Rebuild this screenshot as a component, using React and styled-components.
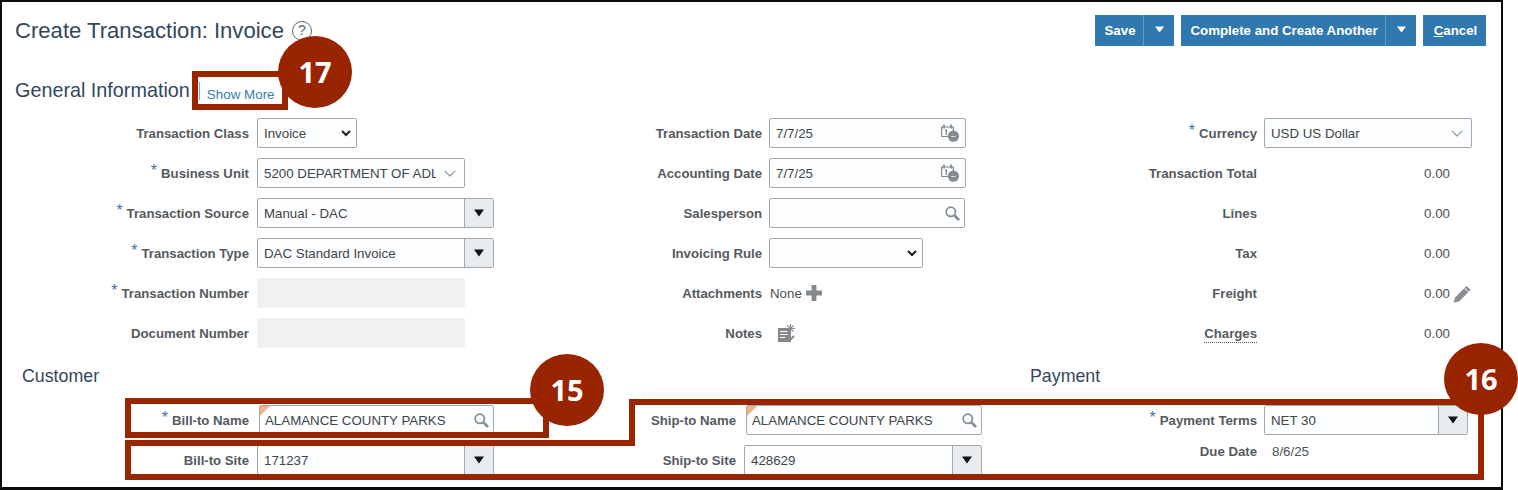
import React from "react";
import styled, { createGlobalStyle } from "styled-components";

const Global = createGlobalStyle`
  html, body { margin: 0; padding: 0; background: #fff; overflow: hidden; }
  body { font-family: "Liberation Sans", Arial, sans-serif; }
`;
const Page = styled.div`position: relative; width: 1518px; height: 490px; overflow: hidden; background: #fff;`;
const Frame = styled.main`
  box-sizing: border-box; width: 1503px; height: 490px;
  border: solid #0c0c0c; border-width: 2px 2px 3px 2px; background: #fff;
`;
const Header = styled.header`display: flex; justify-content: space-between; align-items: center; padding: 13px 15px 0 13px; height: 31px;`;
const TitleWrap = styled.div`display: flex; align-items: center; gap: 8px;`;
const Title = styled.h1`margin: 0; font-size: 22.1px; font-weight: 400; color: #33475b; line-height: 31px; white-space: nowrap;`;
const Help = styled.span`
  box-sizing: border-box; width: 20px; height: 20px; border-radius: 50%; border: 1.5px solid #5c6670; color: #5c6670;
  font-size: 14px; line-height: 17px; text-align: center;
`;
const Actions = styled.div`display: flex; gap: 7px;`;
const ActionGroup = styled.div`display: flex; height: 31px; background: #2f79ae; color: #fff;`;
const ActionLabel = styled.button`
  border: 0; background: transparent; color: #fff; font: bold 13.3px "Liberation Sans", sans-serif;
  width: ${p => p.$w}px; padding: 0 0 0 2px; text-align: center;
`;
const ActionCaret = styled.span`
  width: 31px; display: flex; align-items: center; justify-content: center; border-left: 1px solid #5f9ac4; padding-bottom: 3px; box-sizing: border-box;
`;
const SectionBar = styled.div`display: flex; align-items: center; height: 34px; padding: 27px 0 6px 13px;`;
const SectionTitle = styled.h2`margin: 0; font-size: 19.8px; font-weight: 400; color: #33475b; line-height: 34px; white-space: nowrap;`;
const Divider = styled.span`width: 1px; height: 18px; background: #9aa2a8; margin: 2px 7px 0 9px;`;
const ShowMore = styled.a`font-size: 13.4px; color: #3a7cad; margin-top: 8px; white-space: nowrap;`;
const Columns = styled.div`display: grid; grid-template-columns: 500px 500px 1fr;`;
const Column = styled.div`display: flex; flex-direction: column;`;
const Row = styled.div`
  display: grid; grid-template-columns: ${p => p.$label}px auto; column-gap: ${p => p.$gap ?? 7}px;
  height: ${p => p.$h ?? 40}px; align-items: center; justify-content: start;
`;
const Label = styled.div`
  text-align: right; font-size: 13.2px; font-weight: 700; color: #555a60; white-space: nowrap;
`;
const Req = styled.span`color: #3f74ab; font-size: 16px; font-weight: 400; margin-right: 4px; vertical-align: 2px; line-height: 0;`;
const Charges = styled.span`border-bottom: 1px dotted #555a60; padding-bottom: 1px;`;
const Field = styled.div`
  position: relative; box-sizing: border-box; width: ${p => p.$w}px; height: 30px; margin-left: ${p => p.$inset ?? 0}px;
  display: flex; align-items: center; justify-content: space-between;
  border: 1.5px solid #a2a9ae; border-radius: 2px; background: ${p => p.$off ? "#f0f1f2" : "#fbfdfe"};
  ${p => p.$off ? "border-color: #f0f1f2;" : ""}
  font-size: 13.3px; color: #3f4448; padding-left: ${p => p.$inset ? 5 : 6}px; white-space: nowrap; overflow: hidden;
`;
const FieldText = styled.span`overflow: hidden; flex: 1; min-width: 0;`;
const IconSlot = styled.span`display: flex; align-items: center; justify-content: center; flex: none; width: ${p => p.$w}px;`;
const DropBtn = styled.span`
  flex: none; align-self: stretch; width: 29px; display: flex; align-items: center; justify-content: center;
  background: #e9ecef; border-left: 1.5px solid #a2a9ae; box-sizing: border-box;
`;
const Corner = styled.span`
  position: absolute; left: 0; top: 0; width: 0; height: 0; border-style: solid; border-width: 10px 10px 0 0;
  border-color: #f4b183 transparent transparent transparent;
`;
const Value = styled.div`font-size: 13.3px; color: #4a4f54; white-space: nowrap; display: flex; align-items: center; gap: ${p => p.$gap ?? 4}px; padding-left: ${p => p.$pad ?? 0}px;`;
const Amount = styled.div`
  width: 186px; display: flex; justify-content: flex-end; align-items: center; position: relative; font-size: 13.3px; color: #4a4f54;
`;
const PencilSlot = styled.span`position: absolute; left: 189px; top: -1px;`;
const Subheads = styled.div`display: grid; grid-template-columns: 1008px 1fr; height: 47px; align-items: center; padding-left: 20px;`;
const Subhead = styled.h3`margin: 0; font-size: 17.8px; font-weight: 400; color: #33475b;`;
const Overlay = styled.svg`position: absolute; inset: 0; pointer-events: none;`;
const Badge = styled.div`
  position: absolute; left: ${p => p.$x - 37}px; top: ${p => p.$y - 36}px; width: 74px; height: 72px; border-radius: 50%;
  background: #992500; color: #fff; font: 700 29px/72px "Open Sans", sans-serif; text-align: center;
`;

const Caret = ({ c = "#111", w = 10, h = 8 }) => (
  <svg width={w} height={h} viewBox="0 0 12 9" preserveAspectRatio="none"><path d="M0 .5h12L6 8.500z" fill={c} /></svg>
);
const Chevron = ({ bold }) => bold ? (
  <svg width="10" height="7" viewBox="0 0 10 7"><path d="M1 1l4 4 4-4" fill="none" stroke="#222" strokeWidth="2.1" /></svg>
) : (
  <svg width="12" height="7" viewBox="0 0 12 7"><path d="M.8.8 6 6 11.200.8" fill="none" stroke="#8e9499" strokeWidth="1.1" /></svg>
);
const SearchIcon = () => (
  <svg width="15" height="15" viewBox="0 0 15 15"><circle cx="5.800" cy="5.800" r="4.600" fill="none" stroke="#858b90" strokeWidth="1.700" /><path d="M9.200 9.200 14 14" stroke="#858b90" strokeWidth="2.600" /></svg>
);
const CalendarIcon = () => (
  <svg width="18" height="18" viewBox="0 0 18 18">
    <path d="M.7 3h11.600v9.500H.7z" fill="#fff" stroke="#7d8388" strokeWidth="1.200" />
    <path d="M3 .5v4M10 .5v4" stroke="#7d8388" strokeWidth="1.600" />
    <path d="M4 7l1.400-1v5" fill="none" stroke="#7d8388" strokeWidth="1.100" />
    <circle cx="12.400" cy="12.200" r="5.600" fill="#858b90" /><path d="M10.200 12.400h4.400" stroke="#ddd" strokeWidth="1" />
  </svg>
);
const PlusIcon = () => (
  <svg width="16" height="16" viewBox="0 0 16 16"><path d="M5.600 0h4.800v5.600H16v4.800h-5.600V16H5.600v-5.600H0V5.600h5.600z" fill="#85898d" /></svg>
);
const NotesIcon = () => (
  <svg width="18" height="18" viewBox="0 0 18 18">
    <path d="M0 4h13v14H0z" fill="#85898d" />
    <path d="M2 7.500h8M2 10.500h8M2 13.500h5" stroke="#fff" strokeWidth="1" />
    <path d="M12.500 0v9M8 4.500h9M9.300 1.300l6.400 6.400M15.700 1.300l-6.400 6.400" stroke="#85898d" strokeWidth="1.200" />
    <path d="M11 17l5-5" stroke="#85898d" strokeWidth="2" />
  </svg>
);
const PencilIcon = () => (
  <svg width="19" height="18" viewBox="0 0 19 18">
    <path d="M13.500 1l4.200 3.800L6 16.500.6 17.800 2 12.500z" fill="#8a8f93" />
    <path d="M11.500 3.200l4.300 3.900" stroke="#fff" strokeWidth="1" />
  </svg>
);

const Select = ({ w, children, inset }) => (
  <Field $w={w} $inset={inset}><FieldText>{children}</FieldText><DropBtn><Caret /></DropBtn></Field>
);
const Choice = ({ w, children, bold }) => (
  <Field $w={w}><FieldText>{children}</FieldText><IconSlot $w={bold ? 20 : 28}><Chevron bold={bold} /></IconSlot></Field>
);
const Lookup = ({ w, children, flagged, inset }) => (
  <Field $w={w} $inset={inset}>{flagged && <Corner />}<FieldText>{children}</FieldText><IconSlot $w={23}><SearchIcon /></IconSlot></Field>
);
const DateField = ({ children }) => (
  <Field $w={197}><FieldText>{children}</FieldText><IconSlot $w={30}><CalendarIcon /></IconSlot></Field>
);
const Mark = () => <Req>*</Req>;

export default function App() {
  return (
    <Page>
      <Global />
      <Frame>
        <Header>
          <TitleWrap><Title>Create Transaction: Invoice</Title><Help>?</Help></TitleWrap>
          <Actions>
            <ActionGroup><ActionLabel $w={48}>Save</ActionLabel><ActionCaret><Caret c="#fff" w={9} h={7} /></ActionCaret></ActionGroup>
            <ActionGroup><ActionLabel $w={204}>Complete and Create Another</ActionLabel><ActionCaret><Caret c="#fff" w={9} h={7} /></ActionCaret></ActionGroup>
            <ActionGroup><ActionLabel $w={63}><u>C</u>ancel</ActionLabel></ActionGroup>
          </Actions>
        </Header>
        <SectionBar>
          <SectionTitle>General Information</SectionTitle>
          <Divider />
          <ShowMore>Show More</ShowMore>
        </SectionBar>
        <Columns>
          <Column>
            <Row $label={247} $gap={8}><Label>Transaction Class</Label><Choice w={100} bold>Invoice</Choice></Row>
            <Row $label={247} $gap={8}><Label><Mark />Business Unit</Label><Choice w={208}>5200 DEPARTMENT OF ADL</Choice></Row>
            <Row $label={247} $gap={8}><Label><Mark />Transaction Source</Label><Select w={237}>Manual - DAC</Select></Row>
            <Row $label={247} $gap={8}><Label><Mark />Transaction Type</Label><Select w={237}>DAC Standard Invoice</Select></Row>
            <Row $label={247} $gap={8}><Label><Mark />Transaction Number</Label><Field $w={208} $off /></Row>
            <Row $label={247} $gap={8}><Label>Document Number</Label><Field $w={208} $off /></Row>
          </Column>
          <Column>
            <Row $label={260}><Label>Transaction Date</Label><DateField>7/7/25</DateField></Row>
            <Row $label={260}><Label>Accounting Date</Label><DateField>7/7/25</DateField></Row>
            <Row $label={260}><Label>Salesperson</Label><Lookup w={196} /></Row>
            <Row $label={260}><Label>Invoicing Rule</Label><Choice w={154} bold /></Row>
            <Row $label={260}><Label>Attachments</Label><Value $pad={1} $gap={4}>None <PlusIcon /></Value></Row>
            <Row $label={260}><Label>Notes</Label><Value $pad={9}><NotesIcon /></Value></Row>
          </Column>
          <Column>
            <Row $label={255}><Label><Mark />Currency</Label><Choice w={208}>USD US Dollar</Choice></Row>
            <Row $label={255}><Label>Transaction Total</Label><Amount>0.00</Amount></Row>
            <Row $label={255}><Label>Lines</Label><Amount>0.00</Amount></Row>
            <Row $label={255}><Label>Tax</Label><Amount>0.00</Amount></Row>
            <Row $label={255}><Label>Freight</Label><Amount>0.00<PencilSlot><PencilIcon /></PencilSlot></Amount></Row>
            <Row $label={255}><Label><Charges>Charges</Charges></Label><Amount>0.00</Amount></Row>
          </Column>
        </Columns>
        <Subheads><Subhead>Customer</Subhead><Subhead>Payment</Subhead></Subheads>
        <Columns>
          <Column>
            <Row $label={247} $gap={8}><Label><Mark />Bill-to Name</Label><Lookup w={235} inset={2} flagged>ALAMANCE COUNTY PARKS</Lookup></Row>
            <Row $label={247} $gap={8}><Label>Bill-to Site</Label><Select w={237}>171237</Select></Row>
          </Column>
          <Column>
            <Row $label={234} $gap={8}><Label>Ship-to Name</Label><Lookup w={236} inset={2} flagged>ALAMANCE COUNTY PARKS</Lookup></Row>
            <Row $label={234} $gap={8}><Label>Ship-to Site</Label><Select w={238}>428629</Select></Row>
          </Column>
          <Column>
            <Row $label={255}><Label><Mark />Payment Terms</Label><Select w={204}>NET 30</Select></Row>
            <Row $label={255} $h={22}><Label>Due Date</Label><Value $pad={8}>8/6/25</Value></Row>
          </Column>
        </Columns>
      </Frame>
      <Overlay width="1518" height="490" viewBox="0 0 1518 490" fill="none" stroke="#992500" strokeWidth="6">
        <path d="M195 74H285V107H195Z" />
        <path d="M128 401H546V435H128Z" />
        <path d="M632 402H1481V477H128V443H632Z" />
      </Overlay>
      <Badge $x={315} $y={72}>17</Badge>
      <Badge $x={567} $y={390}>15</Badge>
      <Badge $x={1481} $y={379}>16</Badge>
    </Page>
  );
}
